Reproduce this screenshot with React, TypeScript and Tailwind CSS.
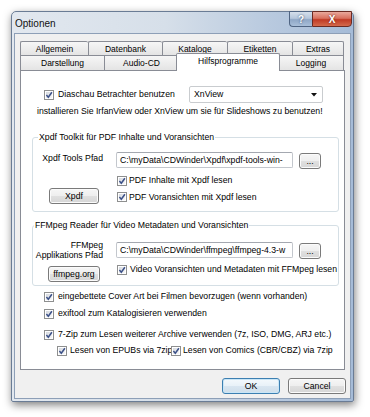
import React from "react";

const row1 = [
  { label: "Allgemein", w: "w-[68px]" },
  { label: "Datenbank", w: "w-[74px]" },
  { label: "Kataloge", w: "w-[65px]" },
  { label: "Etiketten", w: "w-[65px]" },
  { label: "Extras", w: "w-[52px]" },
];

function CheckBox() {
  return (
    <svg width="10" height="10" viewBox="0 0 10 10" className="shrink-0">
      <defs>
        <linearGradient id="cbg" x1="0" y1="0" x2="1" y2="1">
          <stop offset="0" stopColor="#d4d8de" />
          <stop offset="1" stopColor="#f8f8f8" />
        </linearGradient>
      </defs>
      <rect x="0.5" y="0.5" width="9" height="9" fill="#fff" stroke="#8e8f8f" />
      <rect x="2" y="2" width="6" height="6" fill="url(#cbg)" />
      <path d="M2.4 5.1 L4.3 7.3 L7.9 2.3" fill="none" stroke="#3d5289" strokeWidth="1.5" />
    </svg>
  );
}

function Check({ label, gap = "gap-[4px]", className = "" }: { label: string; gap?: string; className?: string }) {
  return (
    <div className={`flex items-center ${gap} ${className}`}>
      <CheckBox />
      <span className="whitespace-nowrap leading-[11px]">{label}</span>
    </div>
  );
}

function Btn({ label, className = "", def = false }: { label: string; className?: string; def?: boolean }) {
  return (
    <div
      className={`flex shrink-0 items-center justify-center rounded-[3px] border leading-[11px] ${
        def
          ? "border-[#3c7fb1] bg-[linear-gradient(to_bottom,#f4f9fc_0%,#e8f1f8_50%,#d9e6f1_51%,#cfdeea_100%)] shadow-[inset_0_0_0_1px_#c9e6f7]"
          : "border-[#7a7a7a] bg-[linear-gradient(to_bottom,#f6f6f6_0%,#eeeeee_50%,#e0e0e0_51%,#d6d6d6_100%)] shadow-[inset_0_0_0_1px_#fbfbfb]"
      } ${className}`}
    >
      {label}
    </div>
  );
}

function PathInput({ value }: { value: string }) {
  return (
    <div className="h-[16px] w-[177px] shrink-0 overflow-hidden rounded-[2px] border border-[#c3c7cd] border-t-[#a4a8b0] bg-white pl-[3px] pt-[2px] leading-[11px] whitespace-nowrap">
      {value}
    </div>
  );
}

export default function App() {
  return (
    <div className="h-[417px] w-[370px] overflow-hidden bg-white pl-[11px] pt-[11px] font-['Liberation_Sans',Arial,sans-serif] text-[8.7px] text-black">
      <div className="flex h-[391px] w-[343px] flex-col rounded-t-[5px] rounded-b-[2px] border border-[#6a7c95] bg-[linear-gradient(to_right,#e2e8ef_0%,#d6dfe9_45%,#b9cadf_75%,#a5bbd7_100%)] px-[2px] pb-[2px] shadow-[1px_3px_9px_rgba(0,0,0,0.5)]">
        {/* title bar */}
        <div className="flex h-[21px] items-start justify-between">
          <span className="mt-[6px] pl-[1px] text-[10px] leading-[12px] text-[#111]">Optionen</span>
          <div className="-mt-px mr-[-1px] flex">
            <div className="flex h-[16px] w-[23px] items-center justify-center rounded-bl-[4px] border border-r-0 border-[#4f6482] bg-[linear-gradient(to_bottom,#d5dfeb_0%,#b5c6db_45%,#8fa7c6_55%,#a9bfd9_100%)] text-[10px] font-bold text-white [text-shadow:0_0_2px_#2c3e5c]">
              ?
            </div>
            <div className="flex h-[16px] w-[40px] items-center justify-center rounded-br-[4px] border border-[#6b2a22] bg-[linear-gradient(to_bottom,#e9a99c_0%,#d8705e_45%,#c03a25_55%,#d46a4c_100%)] text-[10px] font-bold text-white [text-shadow:0_0_2px_#5a1a10]">
              X
            </div>
          </div>
        </div>

        {/* client area */}
        <div className="flex flex-1 flex-col border border-[#8d9fb7] bg-[#f0f0f0]">
          {/* tabs */}
          <div className="ml-[5px] mt-[7px] flex h-[14px] text-[8.5px]">
            {row1.map((t, i) => (
              <div
                key={t.label}
                className={`${t.w} flex items-center justify-center rounded-t-[2px] border-l border-t border-[#898c95] bg-[linear-gradient(to_bottom,#f6f6f6,#e4e4e4)] leading-[10px] ${
                  i === row1.length - 1 ? "border-r" : ""
                }`}
              >
                {t.label}
              </div>
            ))}
          </div>
          <div className="ml-[5px] flex h-[15px] items-end text-[8.5px]">
            <div className="flex h-[15px] w-[84px] items-center justify-center border-l border-t border-[#898c95] bg-[linear-gradient(to_bottom,#f6f6f6,#e4e4e4)] leading-[10px]">
              Darstellung
            </div>
            <div className="flex h-[15px] w-[74px] items-center justify-center border-l border-t border-[#898c95] bg-[linear-gradient(to_bottom,#f6f6f6,#e4e4e4)] leading-[10px]">
              Audio-CD
            </div>
            <div className="relative z-10 -mx-[2px] -mb-px flex h-[18px] w-[104px] items-start justify-center rounded-t-[2px] border-x border-t border-[#898c95] bg-white pt-[2px] leading-[10px]">
              Hilfsprogramme
            </div>
            <div className="flex h-[15px] w-[66px] items-center justify-center border-x border-t border-[#898c95] bg-[linear-gradient(to_bottom,#f6f6f6,#e4e4e4)] leading-[10px]">
              Logging
            </div>
          </div>

          {/* panel */}
          <div className="ml-[5px] h-[300px] w-[325px] border border-[#898c95] bg-white">
            <div className="mt-[15px] flex items-center pl-[23px]">
              <Check label="Diaschau Betrachter benutzen" className="w-[145px]" />
              <div className="flex h-[17px] w-[134px] items-center justify-between rounded-[2px] border border-[#c9cccf] bg-white pl-[4px] pr-[5px] leading-[11px]">
                <span>XnView</span>
                <svg width="6" height="4" viewBox="0 0 6 4">
                  <path d="M0 0 H6 L3 3.5 Z" fill="#111" />
                </svg>
              </div>
            </div>
            <div className="mt-[3px] pl-[16px] leading-[11px] whitespace-nowrap">
              installieren Sie IrfanView oder XnView um sie für Slideshows zu benutzen!
            </div>

            <fieldset className="ml-[11px] mt-[15px] w-[307px] rounded-[3px] border border-[#d5dfe5] pb-[7px]">
              <legend className="ml-[5px] px-[1px] leading-[11px]">Xpdf Toolkit für PDF Inhalte und Voransichten</legend>
              <div className="mt-[9px] flex items-start">
                <div className="w-[83px] shrink-0 pr-[13px] pt-px text-right leading-[11px]">Xpdf Tools Pfad</div>
                <PathInput value="C:\myData\CDWinder\Xpdf\xpdf-tools-win-" />
                <Btn label="..." className="ml-[6px] mt-px h-[16px] w-[22px]" />
              </div>
              <Check label="PDF Inhalte mit Xpdf lesen" gap="gap-[2px]" className="ml-[84px] mt-[6px]" />
              <div className="mt-[2px] flex h-[16px] items-center">
                <div className="w-[83px] shrink-0">
                  <Btn label="Xpdf" className="ml-[16px] h-[16px] w-[50px]" />
                </div>
                <Check label="PDF Voransichten mit Xpdf lesen" gap="gap-[2px]" className="ml-px mt-[2px]" />
              </div>
            </fieldset>

            <fieldset className="ml-[11px] mt-[8px] w-[307px] rounded-[3px] border border-[#d5dfe5] pb-[3px]">
              <legend className="ml-px px-[1px] leading-[11px]">FFMpeg Reader für Video Metadaten und Voransichten</legend>
              <div className="mt-[9px] flex items-start">
                <div className="w-[83px] shrink-0 pr-[13px] text-right leading-[10px]">
                  FFMpeg
                  <br />
                  Applikations Pfad
                </div>
                <div className="mt-[2px]">
                  <PathInput value="C:\myData\CDWinder\ffmpeg\ffmpeg-4.3-w" />
                </div>
                <Btn label="..." className="ml-[6px] mt-[3px] h-[16px] w-[22px]" />
              </div>
              <div className="mt-[4px] flex items-start">
                <div className="w-[83px] shrink-0">
                  <Btn label="ffmpeg.org" className="ml-[15px] mt-[2px] h-[16px] w-[52px]" />
                </div>
                <Check label="Video Voransichten und Metadaten mit FFMpeg lesen" gap="gap-[3px]" className="ml-px" />
              </div>
            </fieldset>

            <Check label="eingebettete Cover Art bei Filmen bevorzugen (wenn vorhanden)" className="ml-[23px] mt-[5px] h-[11px]" />
            <Check label="exiftool zum Katalogisieren verwenden" className="ml-[23px] mt-[6px] h-[11px]" />
            <Check label="7-Zip zum Lesen weiterer Archive verwenden (7z, ISO, DMG, ARJ etc.)" className="ml-[23px] mt-[10px] h-[11px]" />
            <div className="ml-[36px] mt-[5px] flex h-[11px] items-center">
              <div className="w-[114px] shrink-0 overflow-hidden">
                <Check label="Lesen von EPUBs via 7zip" gap="gap-[3px]" />
              </div>
              <Check label="Lesen von Comics (CBR/CBZ) via 7zip" gap="gap-[2px]" />
            </div>
          </div>

          {/* dialog buttons */}
          <div className="mr-[4px] mt-[8px] flex justify-end gap-[8px]">
            <Btn label="OK" def className="h-[16px] w-[58px]" />
            <Btn label="Cancel" className="h-[16px] w-[58px]" />
          </div>
        </div>
      </div>
    </div>
  );
}
